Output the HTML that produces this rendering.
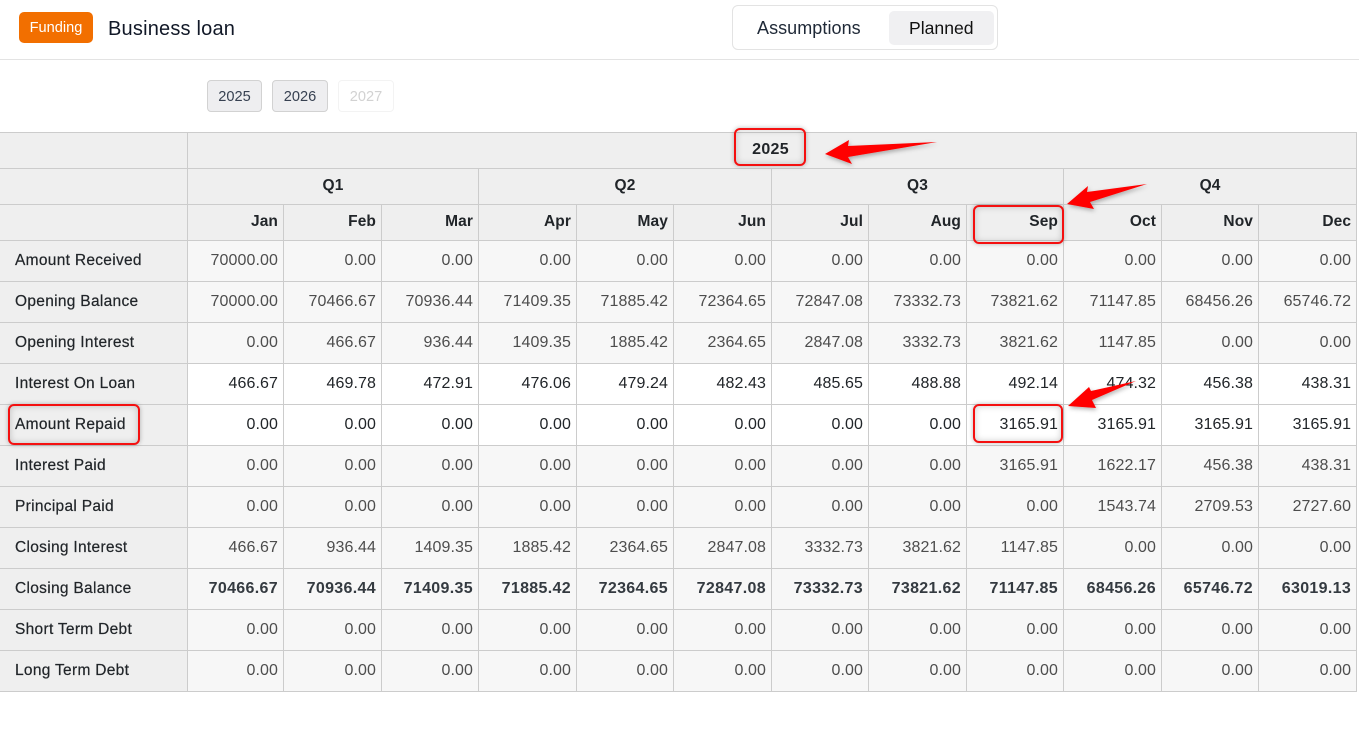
<!DOCTYPE html>
<html><head><meta charset="utf-8"><style>
html,body{margin:0;padding:0;background:#fff}
body{width:1359px;height:743px;position:relative;overflow:hidden;font-family:"Liberation Sans",sans-serif;color:#212529}
.a{position:absolute}
.badge{left:19px;top:12px;width:74px;height:31px;background:#f26f00;border-radius:5px;color:#fff;font-size:14.6px;line-height:32px;text-align:center}
.title{left:108px;top:17px;font-size:20px;line-height:24px;color:#111827;letter-spacing:.2px}
.hr{left:0;top:59px;width:1359px;height:1px;background:#e3e3e3}
.toggle{left:732px;top:5px;width:264px;height:43px;border:1px solid #e3e3e3;border-radius:6px}
.planned{left:889px;top:11px;width:105px;height:34px;background:#f0f0f2;border-radius:5px}
.t1{left:757px;top:17px;font-size:18px;line-height:22px;color:#1f2937;letter-spacing:.06px}
.t2{left:909px;top:17px;font-size:17.6px;line-height:22px;color:#111}
.yb{top:80px;height:30px;border:1px solid #d2d2d2;background:#eeeef0;border-radius:4px;font-size:14.6px;line-height:32px;text-align:center;color:#374151;box-sizing:content-box}
.off{border-color:#f3f3f3;background:#fff;color:#d2d2d2}
table{position:absolute;left:0;top:132px;border-collapse:separate;border-spacing:0;table-layout:fixed;width:1357px;border-top:1px solid #ccc;font-size:16px}
td,th{box-sizing:border-box;border-right:1px solid #ccc;border-bottom:1px solid #ccc;padding:0 5px 0 0;text-align:right;overflow:hidden;white-space:nowrap;background:#f7f7f7;color:#4d4d4d;font-weight:400;letter-spacing:.1px}
thead th{background:#efefef;color:#212529;font-weight:700;height:36px;font-size:15.5px;padding-bottom:1px}
thead th.c{text-align:center;padding-right:0}
thead th.y{font-size:16px;letter-spacing:.3px;padding-right:3px}
tbody td{height:41px}
td.l{background:#efefef;color:#212529;text-align:left;padding-left:15px;font-size:15.5px;letter-spacing:.3px;-webkit-text-stroke:.2px #212529}
tr.w td:not(.l){background:#fff;color:#212529}
tr.b td:not(.l){font-weight:700;color:#343a40;letter-spacing:.33px}
.r{border:2px solid #f41010;border-radius:6px;box-shadow:0 0 5px rgba(0,0,0,.28),inset 0 0 7px rgba(0,0,0,.2);box-sizing:border-box}
svg{position:absolute;left:0;top:0}
</style></head><body>
<div class="a badge">Funding</div>
<div class="a title">Business loan</div>
<div class="a toggle"></div>
<div class="a planned"></div>
<div class="a t1">Assumptions</div>
<div class="a t2">Planned</div>
<div class="a hr"></div>
<div class="a yb" style="left:207px;width:53px">2025</div>
<div class="a yb" style="left:272px;width:54px">2026</div>
<div class="a yb off" style="left:338px;width:54px">2027</div>
<table>
<colgroup><col style="width:188px"><col style="width:96px"><col style="width:98px"><col style="width:97px"><col style="width:98px"><col style="width:97px"><col style="width:98px"><col style="width:97px"><col style="width:98px"><col style="width:97px"><col style="width:98px"><col style="width:97px"><col style="width:98px"></colgroup>
<thead>
<tr><th></th><th class="c y" colspan="12">2025</th></tr>
<tr><th></th><th class="c" colspan="3">Q1</th><th class="c" colspan="3">Q2</th><th class="c" colspan="3">Q3</th><th class="c" colspan="3">Q4</th></tr>
<tr><th></th><th>Jan</th><th>Feb</th><th>Mar</th><th>Apr</th><th>May</th><th>Jun</th><th>Jul</th><th>Aug</th><th>Sep</th><th>Oct</th><th>Nov</th><th>Dec</th></tr>
</thead>
<tbody>
<tr><td class="l">Amount Received</td><td>70000.00</td><td>0.00</td><td>0.00</td><td>0.00</td><td>0.00</td><td>0.00</td><td>0.00</td><td>0.00</td><td>0.00</td><td>0.00</td><td>0.00</td><td>0.00</td></tr>
<tr><td class="l">Opening Balance</td><td>70000.00</td><td>70466.67</td><td>70936.44</td><td>71409.35</td><td>71885.42</td><td>72364.65</td><td>72847.08</td><td>73332.73</td><td>73821.62</td><td>71147.85</td><td>68456.26</td><td>65746.72</td></tr>
<tr><td class="l">Opening Interest</td><td>0.00</td><td>466.67</td><td>936.44</td><td>1409.35</td><td>1885.42</td><td>2364.65</td><td>2847.08</td><td>3332.73</td><td>3821.62</td><td>1147.85</td><td>0.00</td><td>0.00</td></tr>
<tr class="w"><td class="l">Interest On Loan</td><td>466.67</td><td>469.78</td><td>472.91</td><td>476.06</td><td>479.24</td><td>482.43</td><td>485.65</td><td>488.88</td><td>492.14</td><td>474.32</td><td>456.38</td><td>438.31</td></tr>
<tr class="w"><td class="l">Amount Repaid</td><td>0.00</td><td>0.00</td><td>0.00</td><td>0.00</td><td>0.00</td><td>0.00</td><td>0.00</td><td>0.00</td><td>3165.91</td><td>3165.91</td><td>3165.91</td><td>3165.91</td></tr>
<tr><td class="l">Interest Paid</td><td>0.00</td><td>0.00</td><td>0.00</td><td>0.00</td><td>0.00</td><td>0.00</td><td>0.00</td><td>0.00</td><td>3165.91</td><td>1622.17</td><td>456.38</td><td>438.31</td></tr>
<tr><td class="l">Principal Paid</td><td>0.00</td><td>0.00</td><td>0.00</td><td>0.00</td><td>0.00</td><td>0.00</td><td>0.00</td><td>0.00</td><td>0.00</td><td>1543.74</td><td>2709.53</td><td>2727.60</td></tr>
<tr><td class="l">Closing Interest</td><td>466.67</td><td>936.44</td><td>1409.35</td><td>1885.42</td><td>2364.65</td><td>2847.08</td><td>3332.73</td><td>3821.62</td><td>1147.85</td><td>0.00</td><td>0.00</td><td>0.00</td></tr>
<tr class="b"><td class="l">Closing Balance</td><td>70466.67</td><td>70936.44</td><td>71409.35</td><td>71885.42</td><td>72364.65</td><td>72847.08</td><td>73332.73</td><td>73821.62</td><td>71147.85</td><td>68456.26</td><td>65746.72</td><td>63019.13</td></tr>
<tr><td class="l">Short Term Debt</td><td>0.00</td><td>0.00</td><td>0.00</td><td>0.00</td><td>0.00</td><td>0.00</td><td>0.00</td><td>0.00</td><td>0.00</td><td>0.00</td><td>0.00</td><td>0.00</td></tr>
<tr><td class="l">Long Term Debt</td><td>0.00</td><td>0.00</td><td>0.00</td><td>0.00</td><td>0.00</td><td>0.00</td><td>0.00</td><td>0.00</td><td>0.00</td><td>0.00</td><td>0.00</td><td>0.00</td></tr>
</tbody>
</table>
<div class="a r" style="left:734px;top:128px;width:72px;height:38px"></div>
<div class="a r" style="left:973px;top:205px;width:91px;height:39px"></div>
<div class="a r" style="left:973px;top:404px;width:90px;height:39px"></div>
<div class="a r" style="left:8px;top:404px;width:132px;height:41px"></div>
<svg width="1359" height="743" viewBox="0 0 1359 743">
<defs><filter id="s" x="-20%" y="-50%" width="140%" height="200%"><feDropShadow dx="1" dy="2" stdDeviation="2" flood-color="#000" flood-opacity=".3"/></filter></defs>
<g fill="#f00" filter="url(#s)">
<polygon points="825,154 849,140 848,146 937,142 848,157 852,164"/>
<polygon points="1067,204 1088,186 1087,192 1147,184 1090,202 1094,209"/>
<polygon points="1068,406 1089,387 1091,391 1136,381 1092,400 1096,408"/>
</g>
</svg>
</body></html>
